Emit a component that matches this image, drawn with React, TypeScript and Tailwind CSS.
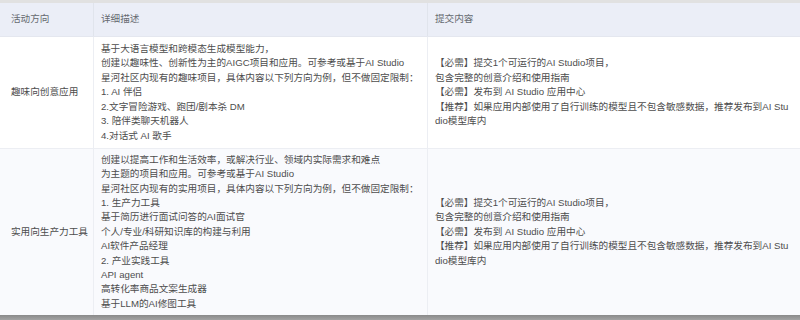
type rowType = {
  direction: string;
  desc: string[];
  submit: string[];
  bg: string;
};

const submitLines = [
  '【必需】提交1个可运行的AI Studio项目，',
  '包含完整的创意介绍和使用指南',
  '【必需】发布到 AI Studio 应用中心',
  '【推荐】如果应用内部使用了自行训练的模型且不包含敏感数据，推荐发布到AI Stu',
  'dio模型库内',
];

const rows: rowType[] = [
  {
    direction: '趣味向创意应用',
    desc: [
      '基于大语言模型和跨模态生成模型能力，',
      '创建以趣味性、创新性为主的AIGC项目和应用。可参考或基于AI Studio',
      '星河社区内现有的趣味项目，具体内容以下列方向为例，但不做固定限制：',
      '1. AI 伴侣',
      '2.文字冒险游戏、跑团/剧本杀 DM',
      '3. 陪伴类聊天机器人',
      '4.对话式 AI 歌手',
    ],
    submit: submitLines,
    bg: 'bg-white h-[112px]',
  },
  {
    direction: '实用向生产力工具',
    desc: [
      '创建以提高工作和生活效率，或解决行业、领域内实际需求和难点',
      '为主题的项目和应用。可参考或基于AI Studio',
      '星河社区内现有的实用项目，具体内容以下列方向为例，但不做固定限制：',
      '1. 生产力工具',
      '基于简历进行面试问答的AI面试官',
      '个人/专业/科研知识库的构建与利用',
      'AI软件产品经理',
      '2. 产业实践工具',
      'API agent',
      '高转化率商品文案生成器',
      '基于LLM的AI修图工具',
    ],
    submit: submitLines,
    bg: 'bg-[#f9fafd] h-[166px]',
  },
];

const Lines = ({ lines }: { lines: string[] }) => (
  <div className="flex flex-col">
    {lines.map((line, i) => (
      <span key={i} className="whitespace-nowrap">
        {line}
      </span>
    ))}
  </div>
);

const App = () => {
  return (
    <div
      className="w-[800px] h-[320px] flex flex-col bg-white text-[9.65px] leading-[14.4px] text-[#4d4d4d] overflow-hidden"
      style={{ fontFamily: '"Liberation Sans", "Noto Sans CJK SC", sans-serif' }}
    >
      <div className="h-[3px] bg-[#e1e1e1]" />
      <div className="grid grid-cols-[94px_334px_1fr] h-[34px] bg-[#ebeef7] text-[#666a70] border-b border-[#e4e7ef]">
        <div className="flex items-center pl-[11px] border-r border-[#e0e4ec]">活动方向</div>
        <div className="flex items-center pl-[7px] border-r border-[#e0e4ec]">详细描述</div>
        <div className="flex items-center pl-[7px]">提交内容</div>
      </div>
      {rows.map((row, idx) => (
        <div
          key={row.direction}
          className={`grid grid-cols-[94px_334px_1fr] ${row.bg} ${idx === 0 ? 'border-b border-[#eceef3]' : ''}`}
        >
          <div className="flex items-center pl-[11px] border-r border-[#eceef3] whitespace-nowrap">
            {row.direction}
          </div>
          <div className="flex items-center pl-[7px] border-r border-[#eceef3]">
            <Lines lines={row.desc} />
          </div>
          <div className="flex items-center pl-[7px]">
            <Lines lines={row.submit} />
          </div>
        </div>
      ))}
      <div className="h-[5px] bg-gradient-to-b from-[#8a8a8a] to-[#a3a3a3]" />
    </div>
  );
};

export default App;
